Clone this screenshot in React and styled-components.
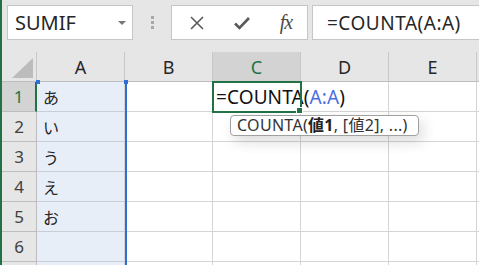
import React from 'react'
import styled, { createGlobalStyle } from 'styled-components'

const GlobalStyle = createGlobalStyle`
  html, body {
    margin: 0;
    padding: 0;
    background: #ffffff;
    overflow: hidden;
  }
  body {
    font-family: "Noto Sans", "Noto Sans CJK JP", sans-serif;
  }
`

const COLS = ['A', 'B', 'C', 'D', 'E', 'F']
const ROWS = ['あ', 'い', 'う', 'え', 'お', '', '']

const App = () => {
  return (
    <>
      <GlobalStyle />
      <Frame>
        <Edge />
        <Main>
          <Toolbar>
            <NameBox>
              <NameText>SUMIF</NameText>
              <Caret />
            </NameBox>
            <Grip>
              <Dot />
              <Dot />
              <Dot />
            </Grip>
            <ButtonBox>
              <IconButton>
                <svg width="16" height="16" viewBox="0 0 16 16">
                  <path d="M2 2 L14 14 M14 2 L2 14" stroke="#5a5a5a" strokeWidth="1.6" fill="none" />
                </svg>
              </IconButton>
              <IconButton>
                <svg width="18" height="16" viewBox="0 0 18 16">
                  <path d="M2 8.5 L6.5 13 L16 3" stroke="#5a5a5a" strokeWidth="2.6" fill="none" />
                </svg>
              </IconButton>
              <IconButton>
                <Fx>fx</Fx>
              </IconButton>
            </ButtonBox>
            <FormulaInput>=COUNTA(A:A)</FormulaInput>
          </Toolbar>

          <Sheet>
            <Corner>
              <Triangle />
            </Corner>
            {COLS.map((c, ci) => (
              <ColHead key={c} $c={ci + 2} $active={c === 'C'}>{c}</ColHead>
            ))}
            <RefColumn>
              <RefHandle $side="left" />
              <RefHandle $side="right" />
            </RefColumn>
            {ROWS.map((text, i) => (
              <React.Fragment key={i}>
                <RowHead $r={i + 2} $active={i === 0}>{i + 1}</RowHead>
                {COLS.map((c, ci) => {
                  const active = c === 'C' && i === 0
                  return (
                    <Cell key={c} $c={ci + 2} $r={i + 2} $ref={c === 'A'} $active={active}>
                      {c === 'A' && text}
                      {active && (
                        <>
                          <Edit>
                            =COUNTA(<Ref>A:A</Ref>)
                          </Edit>
                          <FillHandle />
                          <Tip>
                            COUNTA(<b>値1</b>, [値2], ...)
                          </Tip>
                        </>
                      )}
                    </Cell>
                  )
                })}
              </React.Fragment>
            ))}
          </Sheet>
        </Main>
      </Frame>
    </>
  )
}

export default App

const Frame = styled.div`
  display: flex;
  width: 479px;
  height: 265px;
  overflow: hidden;
`

const Edge = styled.div`
  flex: 0 0 2px;
  background: #217346;
`

const Main = styled.div`
  flex: 1;
  min-width: 0;
  display: flex;
  flex-direction: column;
  background: #e6e6e6;
  overflow: hidden;
`

const Toolbar = styled.div`
  flex: 0 0 52px;
  box-sizing: border-box;
  display: flex;
  align-items: flex-start;
  padding: 5px 0 0 5px;
  overflow: hidden;

  & > * {
    flex-shrink: 0;
  }
`

const Box = styled.div`
  height: 35px;
  box-sizing: border-box;
  background: #ffffff;
  border: 1px solid #c6c6c6;
  display: flex;
  align-items: center;
`

const NameBox = styled(Box)`
  width: 126px;
  padding: 0 6px 0 7px;
  justify-content: space-between;
`

const NameText = styled.span`
  font-size: 20px;
  color: #262626;
`

const Caret = styled.span`
  width: 0;
  height: 0;
  border-left: 4px solid transparent;
  border-right: 4px solid transparent;
  border-top: 4px solid #777777;
  margin-top: 1px;
`

const Grip = styled.div`
  width: 4px;
  margin: 11px 16px 0 18px;
  display: flex;
  flex-direction: column;
  gap: 2px;
`

const Dot = styled.span`
  width: 3px;
  height: 3px;
  background: #a8a8a8;
`

const ButtonBox = styled(Box)`
  width: 137px;
  padding: 0 10px 0 14px;
  justify-content: space-between;
`

const IconButton = styled.span`
  width: 22px;
  display: flex;
  justify-content: center;
  align-items: center;
`

const Fx = styled.span`
  font-family: "Liberation Serif", serif;
  font-style: italic;
  font-size: 20px;
  color: #4a4a4a;
  letter-spacing: -1px;
`

const FormulaInput = styled(Box)`
  margin-left: 4px;
  width: 220px;
  padding-left: 14px;
  font-size: 19px;
  letter-spacing: 0.5px;
  color: #262626;
  border-right: none;
`

const Sheet = styled.div`
  flex: 1;
  display: grid;
  grid-template-columns: 35px repeat(6, 88px);
  grid-template-rows: repeat(8, 30px);
  background: #ffffff;
  overflow: hidden;
`

const Corner = styled.div`
  grid-column: 1;
  grid-row: 1;
  background: #e6e6e6;
  border-right: 1px solid #c8c8c8;
  border-bottom: 1px solid #bdbdbd;
  display: flex;
  align-items: flex-end;
  justify-content: flex-end;
  padding: 0 3px 3px 0;
`

const Triangle = styled.span`
  width: 21px;
  height: 20px;
  background: #bcbcbc;
  clip-path: polygon(100% 0, 100% 100%, 0 100%);
`

const ColHead = styled.div`
  grid-column: ${(p) => p.$c};
  grid-row: 1;
  background: ${(p) => (p.$active ? '#d3d3d3' : '#e6e6e6')};
  color: ${(p) => (p.$active ? '#217346' : '#262626')};
  border-right: 1px solid #c8c8c8;
  border-bottom: 1px solid #bdbdbd;
  display: flex;
  align-items: center;
  justify-content: center;
  font-size: 18px;
`

const RowHead = styled.div`
  grid-column: 1;
  grid-row: ${(p) => p.$r};
  background: ${(p) => (p.$active ? '#d3d3d3' : '#e6e6e6')};
  color: ${(p) => (p.$active ? '#217346' : '#404040')};
  border-right: ${(p) => (p.$active ? '2px solid #217346' : '1px solid #bdbdbd')};
  border-bottom: 1px solid #bdbdbd;
  display: flex;
  align-items: center;
  justify-content: center;
  font-size: 17px;
`

const Cell = styled.div`
  grid-column: ${(p) => p.$c};
  grid-row: ${(p) => p.$r};
  position: relative;
  background: ${(p) => (p.$ref ? '#e8eef8' : '#ffffff')};
  border-right: 1px solid #d4d4d4;
  border-bottom: 1px solid ${(p) => (p.$ref ? '#c9ced6' : '#d4d4d4')};
  display: flex;
  align-items: center;
  padding-left: 6px;
  font-size: 16px;
  color: #262626;
  ${(p) =>
    p.$active &&
    `
    z-index: 3;
    outline: 2px solid #217346;
    outline-offset: -1px;
  `}
`

const RefColumn = styled.div`
  grid-column: 2;
  grid-row: 2 / -1;
  position: relative;
  z-index: 2;
  border-right: 2px solid #2f6fd1;
  margin-right: -2px;
  pointer-events: none;
`

const RefHandle = styled.span`
  position: absolute;
  top: -2px;
  ${(p) => (p.$side === 'left' ? 'left: -1px;' : 'right: -3px;')}
  width: 4px;
  height: 4px;
  background: #2f6fd1;
`

const Edit = styled.span`
  font-size: 19px;
  letter-spacing: 0.1px;
  color: #111111;
  margin-left: -3px;
  white-space: nowrap;
`

const Ref = styled.span`
  color: #4a6ee0;
`

const FillHandle = styled.span`
  position: absolute;
  right: -3px;
  bottom: -3px;
  width: 5px;
  height: 5px;
  background: #217346;
  border: 1px solid #ffffff;
`

const Tip = styled.div`
  position: absolute;
  left: 17px;
  top: 33px;
  height: 21px;
  box-sizing: border-box;
  padding: 0 10px 0 6px;
  background: #ffffff;
  border: 1px solid #a0a0a0;
  border-radius: 4px;
  box-shadow: 4px 6px 14px rgba(0, 0, 0, 0.14);
  font-size: 16px;
  letter-spacing: 0.3px;
  line-height: 19px;
  color: #333333;
  white-space: nowrap;
  z-index: 5;

  b {
    font-weight: bold;
    color: #222222;
  }
`
